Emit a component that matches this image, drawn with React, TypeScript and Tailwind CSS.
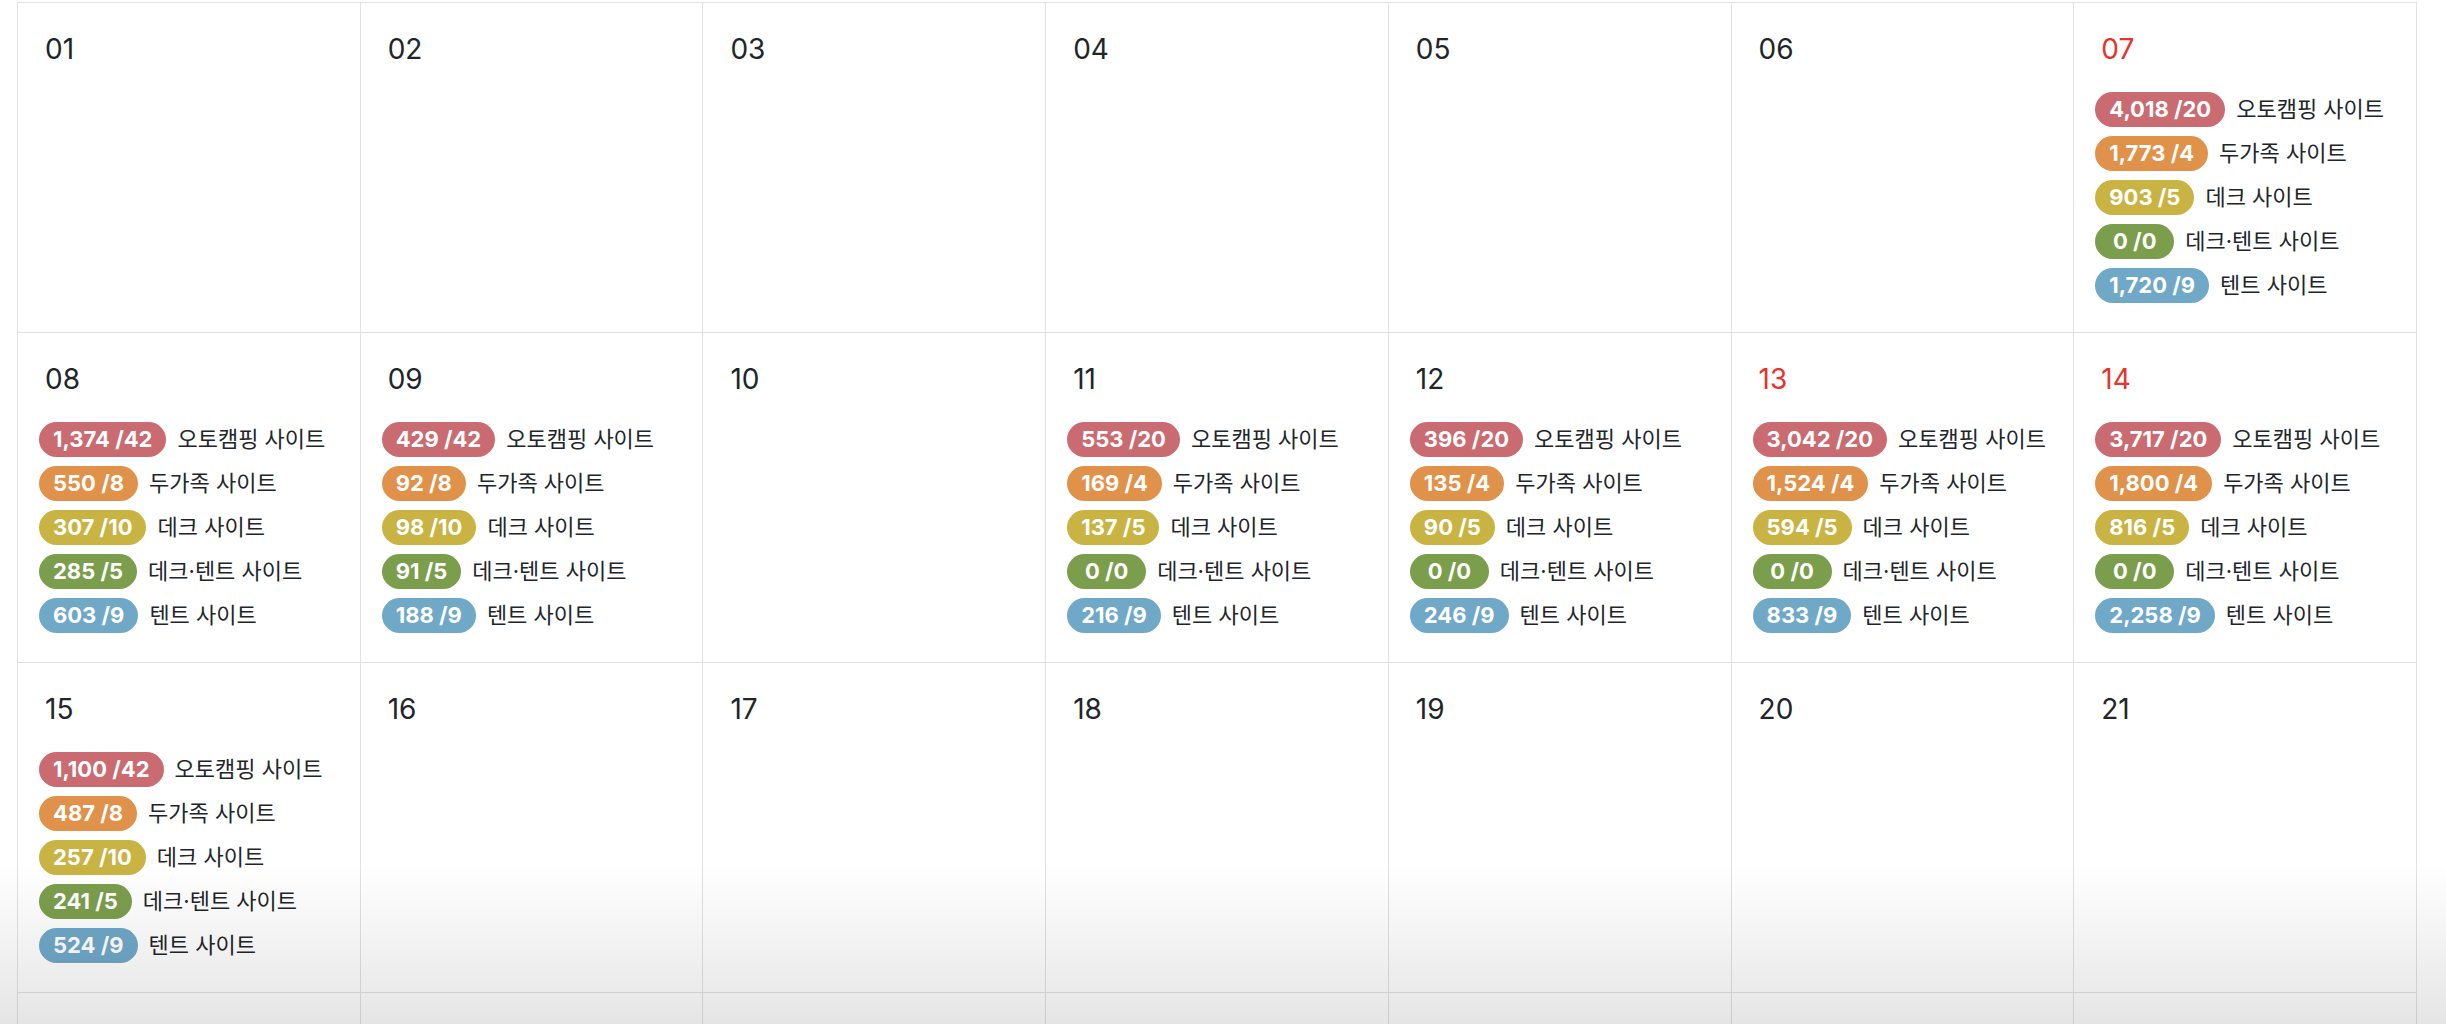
import React from "react";

type Stat = [string, string];
const LABELS = ["오토캠핑 사이트", "두가족 사이트", "데크 사이트", "데크·텐트 사이트", "텐트 사이트"];
const COLORS = ["bg-[#c96b71]", "bg-[#e0914a]", "bg-[#c9b342]", "bg-[#7b9e4c]", "bg-[#70a8c8]"];

const DATA: Record<string, Stat[]> = {
  "07": [["4,018", "20"], ["1,773", "4"], ["903", "5"], ["0", "0"], ["1,720", "9"]],
  "08": [["1,374", "42"], ["550", "8"], ["307", "10"], ["285", "5"], ["603", "9"]],
  "09": [["429", "42"], ["92", "8"], ["98", "10"], ["91", "5"], ["188", "9"]],
  "11": [["553", "20"], ["169", "4"], ["137", "5"], ["0", "0"], ["216", "9"]],
  "12": [["396", "20"], ["135", "4"], ["90", "5"], ["0", "0"], ["246", "9"]],
  "13": [["3,042", "20"], ["1,524", "4"], ["594", "5"], ["0", "0"], ["833", "9"]],
  "14": [["3,717", "20"], ["1,800", "4"], ["816", "5"], ["0", "0"], ["2,258", "9"]],
  "15": [["1,100", "42"], ["487", "8"], ["257", "10"], ["241", "5"], ["524", "9"]],
};

const RED = new Set(["07", "13", "14"]);

function Cell({ day, showDate }: { day: string; showDate: boolean }) {
  const stats = DATA[day];
  return (
    <div className="h-[330px] border-r border-b border-[#dee2e6] px-[21px] pt-[30px] overflow-hidden">
      <div
        className={`ml-[6px] h-[32px] text-[28px] leading-[32px] ${RED.has(day) ? "text-[#e8322b]" : "text-[#212529]"}`}
        style={{ fontFamily: "Inter, 'Noto Sans CJK KR', sans-serif" }}
      >
        {showDate ? day : ""}
      </div>
      {stats && (
        <div className="mt-[27px] flex flex-col gap-[9px]">
          {stats.map((s, i) => (
            <div key={i} className="flex items-center h-[35px]">
              <span
                className={`${COLORS[i]} h-[35px] min-w-[79px] rounded-full px-[14px] flex items-center justify-center text-white font-bold text-[22px] whitespace-nowrap`}
                style={{ fontFamily: "Inter, 'Noto Sans CJK KR', sans-serif" }}
              >
                {s[0]} /{s[1]}
              </span>
              <span
                className="ml-[11px] text-[22px] text-[#212529] whitespace-nowrap"
                style={{ fontFamily: "Inter, 'Noto Sans CJK KR', sans-serif" }}
              >
                {LABELS[i]}
              </span>
            </div>
          ))}
        </div>
      )}
    </div>
  );
}

export default function App() {
  const days: string[] = [];
  for (let d = 1; d <= 28; d++) days.push(d.toString().padStart(2, "0"));
  return (
    <div className="relative h-[1024px] w-[2446px] overflow-hidden bg-white">
      <div className="pt-[2px] pl-[17px]">
        <div className="w-[2400px] grid grid-cols-7 border-l border-t border-[#dee2e6]">
          {days.map((d, idx) => (
            <Cell key={d} day={d} showDate={idx < 21} />
          ))}
        </div>
      </div>
      <div className="pointer-events-none absolute left-0 right-0 bottom-0 h-[160px] bg-gradient-to-b from-transparent to-[rgba(0,0,0,0.1)]" />
    </div>
  );
}
